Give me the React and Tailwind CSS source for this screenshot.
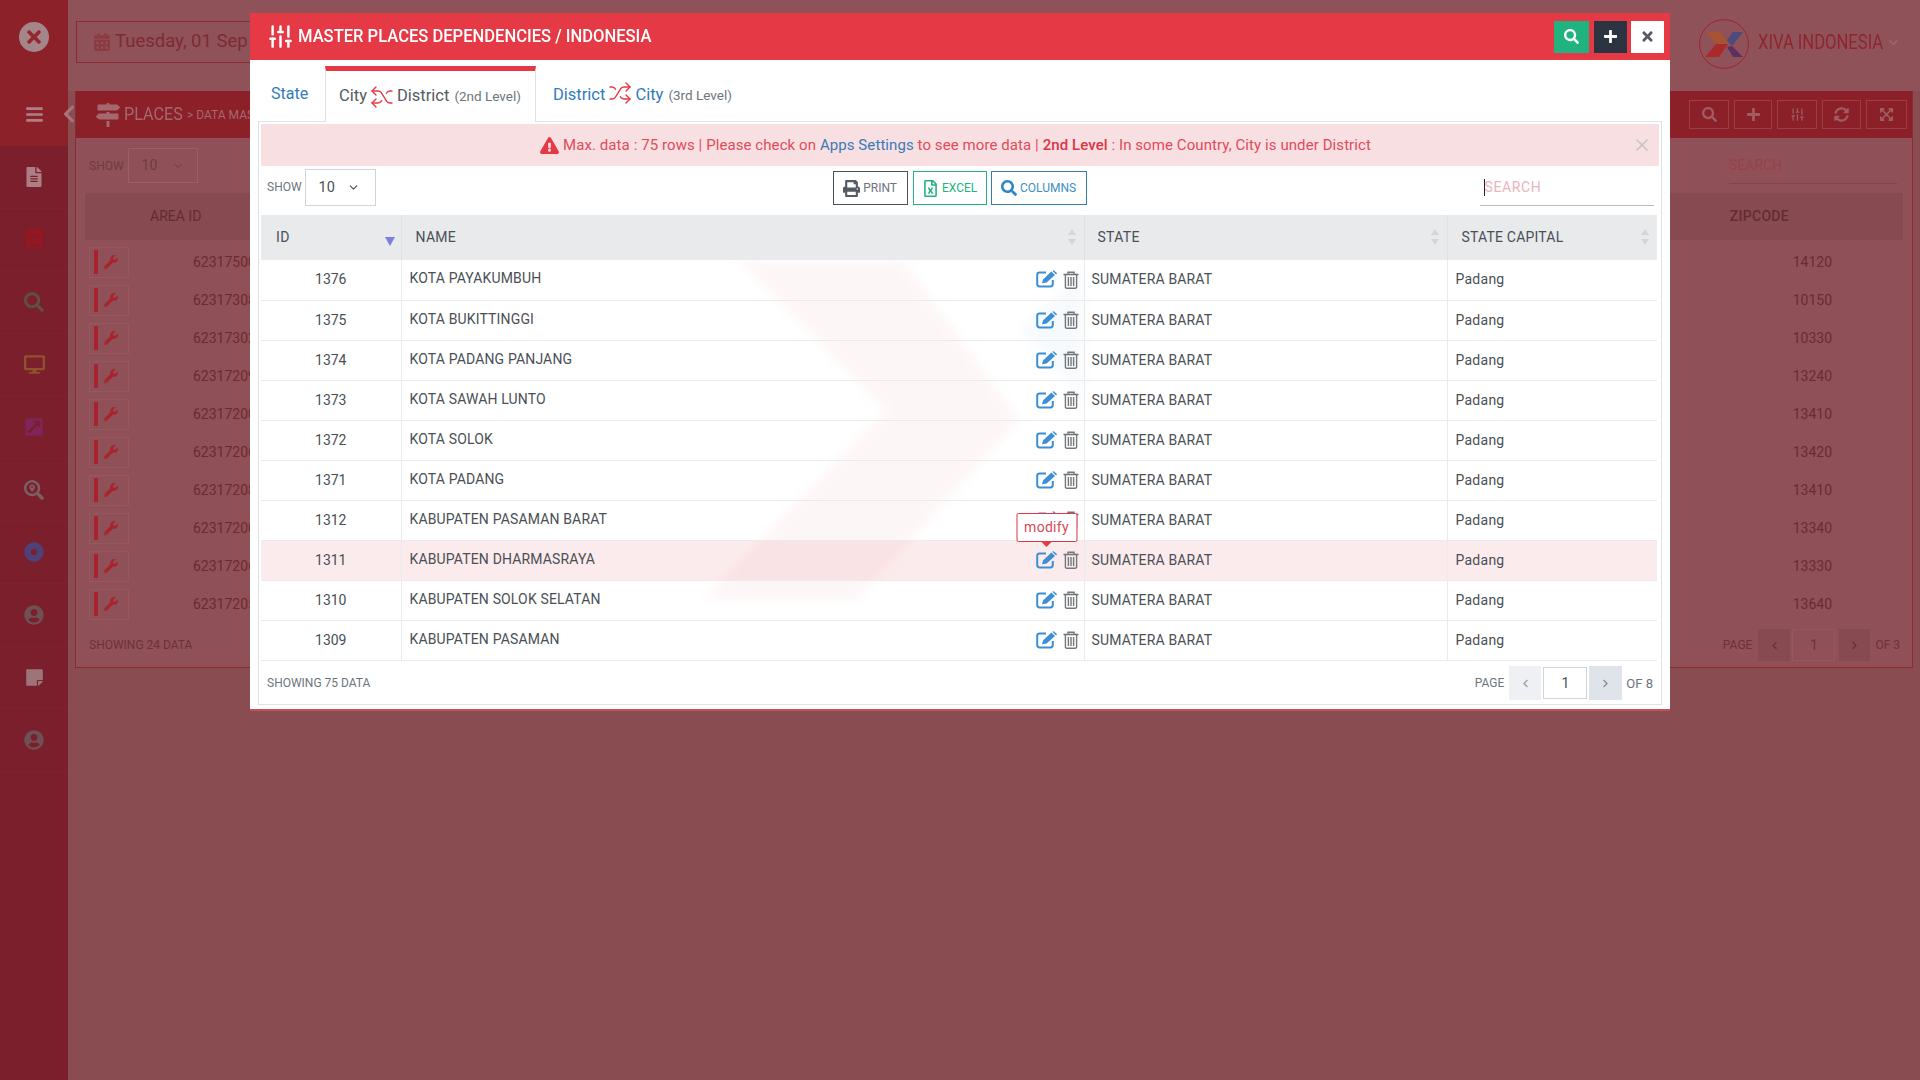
import React from "react";
import {
  FaCalendarAlt, FaBars, FaFileAlt, FaBook, FaSearch, FaDesktop, FaExternalLinkSquareAlt, FaSearchLocation, FaDotCircle,
  FaUserCircle, FaStickyNote, FaPlus, FaTimes, FaPrint, FaRegFileExcel, FaExclamationTriangle,
  FaWrench, FaMapSigns, FaChevronLeft, FaChevronRight, FaSyncAlt, FaExpandArrowsAlt,
} from "react-icons/fa";
import { ChevronDown, Shuffle, SlidersVertical, X } from "lucide-react";

const sideIcons = [
  [FaFileAlt, "text-[#ac7f85]", 20],
  [FaBook, "text-[#941722]", 20],
  [FaSearch, "text-[#5f4f40]", 20],
  [FaDesktop, "text-[#8e522e]", 21],
  [FaExternalLinkSquareAlt, "text-[#80245a]", 20],
  [FaSearchLocation, "text-[#7d6064]", 20],
  [FaDotCircle, "text-[#50407a]", 20],
  [FaUserCircle, "text-[#6f5054]", 20],
  [FaStickyNote, "text-[#9d7479]", 19],
  [FaUserCircle, "text-[#6f5054]", 20],
];

const bgRows = [
  ["62317500", "14120"], ["62317308", "10150"], ["62317302", "10330"], ["62317209", "13240"], ["62317200", "13410"],
  ["62317206", "13420"], ["62317208", "13410"], ["62317200", "13340"], ["62317206", "13330"], ["62317205", "13640"],
];

const rows = [
  ["1376", "KOTA PAYAKUMBUH"], ["1375", "KOTA BUKITTINGGI"], ["1374", "KOTA PADANG PANJANG"], ["1373", "KOTA SAWAH LUNTO"],
  ["1372", "KOTA SOLOK"], ["1371", "KOTA PADANG"], ["1312", "KABUPATEN PASAMAN BARAT"], ["1311", "KABUPATEN DHARMASRAYA"],
  ["1310", "KABUPATEN SOLOK SELATAN"], ["1309", "KABUPATEN PASAMAN"],
];

function LogoX({ size }) {
  return (
    <svg width={size} height={size} viewBox="0 0 50 50">
      <circle cx="25" cy="25" r="24.4" fill="none" stroke="#9c2530" strokeWidth="1" />
      <polygon points="7,13 22,13 29,25 17,25" fill="#a85434" />
      <polygon points="17,25 29,25 20,38 6,38" fill="#a82a2c" />
      <polygon points="28,21 34,13 44,13 33,27" fill="#4d4a7e" />
      <polygon points="28,28 33,27 44,38 34,38" fill="#5b2f61" />
    </svg>
  );
}

function SortIcon() {
  return (
    <svg width="10" height="18" viewBox="0 0 10 18" className="shrink-0">
      <polygon points="5,1 9,7 1,7" fill="#d3d6d9" />
      <polygon points="5,17 9,11 1,11" fill="#d3d6d9" />
    </svg>
  );
}

function EditIcon() {
  return (
    <svg width="22" height="18" viewBox="0 0 22 18" className="absolute -top-px left-0 text-[#3a8fd6]">
      <path d="M10 2.5H3.6A2.4 2.4 0 0 0 1.2 4.9V14.1A2.4 2.4 0 0 0 3.6 16.5H14.4A2.4 2.4 0 0 0 16.8 14.1V10" fill="none" stroke="currentColor" strokeWidth="2" />
      <path d="M6 13.2L7 9.6L15.4 1.6L19 5L10.6 12.6ZM16.3.8L17.6.2L21 3L20.4 4.3L19.8 4.3Z" fill="currentColor" />
    </svg>
  );
}

function TrashIcon() {
  return (
    <svg width="16" height="18" viewBox="0 0 16 18" className="ml-[5px] shrink-0 text-[#72777b]">
      <path d="M0.5 3.5H15.5" stroke="currentColor" strokeWidth="1.6" />
      <path d="M5 3V1.3H11V3" fill="none" stroke="currentColor" strokeWidth="1.4" />
      <path d="M2.4 3.5V16A1.2 1.2 0 0 0 3.6 17.2H12.4A1.2 1.2 0 0 0 13.6 16V3.5" fill="none" stroke="currentColor" strokeWidth="1.4" />
      <path d="M5.4 6V15M8 6V15M10.6 6V15" stroke="currentColor" strokeWidth="1.4" />
    </svg>
  );
}

function Background() {
  return (
    <div className="flex h-[1080px] w-full bg-[#894c51]">
      <aside className="flex w-[68px] shrink-0 flex-col bg-[#7a1f2b]">
        <div className="flex h-[146px] flex-col items-center bg-[#8c212a]">
          <div className="mt-[22px] flex h-[30px] w-[30px] items-center justify-center rounded-full bg-[#a4868a]">
            <FaTimes size={20} className="text-[#96262d]" />
          </div>
          <FaBars size={19} className="mt-[53px] text-[#ae7f84]" />
        </div>
        {sideIcons.map(([Icon, color, size], i) => (
          <div key={i} className="flex h-[62.6px] items-center justify-center border-b border-[#7f2230]">
            <Icon size={size} className={color} />
          </div>
        ))}
      </aside>
      <main className="flex min-w-0 flex-1 flex-col">
        <div className="flex h-[91px] shrink-0 items-start bg-[#905259]">
          <div className="ml-[8px] mt-[21px] flex h-[42px] w-[300px] items-center gap-[4px] border border-[#8b2a33] pl-[16px] text-[18.5px] text-[#7c2b34]">
            <FaCalendarAlt size={18} className="text-[#8d3a43]" />
            <span>Tuesday, 01 Sep 2020</span>
          </div>
          <div className="ml-auto mr-[19px] mt-[19px] flex items-center">
            <LogoX size={50} />
            <span className="-mt-[4px] ml-[9px] w-[125px] origin-left scale-x-[0.83] whitespace-nowrap text-[20px] text-[#8f2530]">XIVA INDONESIA</span>
            <ChevronDown size={15} className="-mt-[4px] ml-[3px] text-[#a06a70]" />
          </div>
        </div>
        <section className="relative ml-[7px] flex h-[577px] w-[1838px] flex-col border-b border-l border-r border-[#8b2a33] bg-[#8f5157]">
          <FaChevronLeft size={20} className="absolute -left-[17px] top-[13px] text-[#a87379]" />
          <div className="flex h-[47px] shrink-0 items-center bg-[#8b2029] pl-[20px] pr-[5px] text-[#a5686e]">
            <FaMapSigns size={24} />
            <span className="ml-[4px] w-[60px] origin-left scale-x-[0.85] whitespace-nowrap text-[19px]">PLACES</span>
            <span className="ml-[3px] text-[12px]">&gt; DATA MASTER</span>
            <div className="ml-auto flex gap-[5px]">
              {[[FaSearch, 40], [FaPlus, 38], [SlidersVertical, 40], [FaSyncAlt, 39], [FaExpandArrowsAlt, 41]].map(([Icon, w], i) => (
                <div key={i} style={{ width: w }} className="flex h-[29px] items-center justify-center border border-[#9a3d45] text-[#a05c62]">
                  <Icon size={15} />
                </div>
              ))}
            </div>
          </div>
          <div className="flex h-[55px] shrink-0 items-center pl-[13px] pr-[15px] text-[12px] text-[#6f3a40]">
            <span>SHOW</span>
            <div className="ml-[4px] flex h-[35px] w-[70px] items-center justify-between border border-[#9a6066] px-[13px] text-[14px]">
              10 <ChevronDown size={12} />
            </div>
            <div className="ml-auto flex h-[37px] w-[168px] items-center border-b border-[#80454b] text-[14px] text-[#98404a]">SEARCH</div>
          </div>
          <div className="mx-[9px] flex h-[47px] shrink-0 items-center bg-[#864a50] text-[14px] text-[#652a32]">
            <span className="ml-[65px]">AREA ID</span>
            <span className="ml-auto mr-[114px] text-[14px] font-medium tracking-[0.3px]">ZIPCODE</span>
          </div>
          <div className="mt-[3px] flex flex-col">
            {bgRows.map(([id, zip]) => (
              <div key={id + zip} className="flex h-[38px] items-center pl-[13px] text-[14px] text-[#6c2a32]">
                <div className="flex h-[31px] w-[40px] items-center border border-[#96585e] pl-[4px]">
                  <span className="h-[24px] w-[4px] bg-[#a8232d]" />
                  <FaWrench size={14} className="ml-[6px] text-[#a8232d]" />
                </div>
                <span className="ml-[64px]">{id}</span>
                <span className="ml-auto mr-[80px]">{zip}</span>
              </div>
            ))}
          </div>
          <div className="flex flex-1 items-center pl-[13px] pr-[12px] text-[12px] text-[#6e3138]">
            <span>SHOWING 24 DATA</span>
            <span className="ml-auto">PAGE</span>
            <div className="ml-[6px] flex h-[32px] w-[32px] items-center justify-center bg-[#864a50]"><FaChevronLeft size={9} /></div>
            <div className="ml-[2px] flex h-[32px] w-[43px] items-center justify-center border border-[#96585e] text-[14px]">1</div>
            <div className="ml-[4px] flex h-[32px] w-[31px] items-center justify-center bg-[#864a50]"><FaChevronRight size={9} /></div>
            <span className="ml-[5px]">OF 3</span>
          </div>
        </section>
      </main>
    </div>
  );
}

function Modal() {
  return (
    <div className="absolute left-[250px] top-[13px] z-10 flex h-[698px] w-[1420px] flex-col border-b-2 border-[#c4505a] bg-white">
      <header className="flex h-[47px] shrink-0 items-center bg-[#e63946] pl-[17px] pr-[6px] text-white">
        <SlidersVertical size={27} strokeWidth={2.2} />
        <h1 className="-mt-[2px] ml-[4px] origin-left scale-x-[0.92] whitespace-nowrap text-[18px] font-medium">MASTER PLACES DEPENDENCIES / INDONESIA</h1>
        <div className="ml-auto flex items-center">
          <button className="flex h-[32px] w-[35px] items-center justify-center bg-[#20b37f]"><FaSearch size={15} /></button>
          <button className="ml-[5px] flex h-[32px] w-[33px] items-center justify-center bg-[#2b3440]"><FaPlus size={15} /></button>
          <button className="ml-[4px] flex h-[32px] w-[33px] items-center justify-center bg-white text-[#555b62]"><FaTimes size={15} /></button>
        </div>
      </header>

      <nav className="mx-[8px] flex h-[61px] shrink-0 items-end">
        <div className="flex h-[55px] w-[67px] items-start pl-[13px] pt-[16px] text-[16px] text-[#337ab7]">State</div>
        <div className="relative top-px z-[1] flex h-[56px] w-[211px] items-center border-x border-[#dee2e6] border-t-[5px] border-t-[#e63946] bg-white pl-[13px] text-[16.5px] text-[#555b62]">
          <span>City</span>
          <Shuffle size={24} strokeWidth={1.4} className="mx-[3px] -scale-x-100 text-[#e63946]" />
          <span>District</span>
          <span className="ml-[5px] text-[13.5px] text-[#6c757d]">(2nd Level)</span>
        </div>
        <div className="flex h-[51px] items-center pl-[17px] text-[16.5px] text-[#337ab7]">
          <span>District</span>
          <Shuffle size={24} strokeWidth={1.4} className="mx-[3px] -mt-[6px] text-[#e63946]" />
          <span>City</span>
          <span className="ml-[5px] text-[13.5px] text-[#6c757d]">(3rd Level)</span>
        </div>
      </nav>

      <div className="relative mx-[8px] flex h-[584px] flex-col border border-[#dee2e6] px-[2px] pt-[2px]">
        <div className="flex h-[42px] shrink-0 items-center justify-center bg-[#f8dfe2] pr-[9px] text-[15px] tracking-[0.08px] text-[#e14b5a]">
          <FaExclamationTriangle size={19} className="mr-[4px] text-[#e63946]" />
          <span>Max. data : 75 rows | Please check on&nbsp;</span>
          <span className="text-[#3a7ab8]">Apps Settings</span>
          <span>&nbsp;to see more data |&nbsp;</span>
          <b className="font-medium text-[#dc3545]">2nd Level</b>
          <span>&nbsp;: In some Country, City is under District</span>
          <X size={20} className="absolute right-[9px] top-[13px] text-[#c9c4c6]" />
        </div>

        <div className="flex h-[49px] shrink-0 items-end pb-[9px]">
          <span className="mb-[10px] ml-[6px] text-[12px] text-[#6c757d]">SHOW</span>
          <div className="ml-[3px] flex h-[37px] w-[71px] items-center border border-[#ced4da] pl-[13px] pr-[15px] text-[14.5px] text-[#495057]">
            10 <ChevronDown size={13} className="ml-auto" />
          </div>
          <button className="mb-px ml-[457px] flex h-[34px] w-[75px] items-center justify-center gap-[3px] border border-[#4a4f55] text-[12px] text-[#6c757d]">
            <FaPrint size={17} className="text-[#555b62]" /> PRINT
          </button>
          <button className="mb-px ml-[5px] flex h-[34px] w-[74px] items-center justify-center gap-[3px] border border-[#20b37f] text-[12px] text-[#20b37f]">
            <FaRegFileExcel size={17} /> EXCEL
          </button>
          <button className="mb-px ml-[4px] flex h-[34px] w-[96px] items-center justify-center gap-[3px] border border-[#337ab7] text-[12px] text-[#3a8fc4]">
            <FaSearch size={16} className="text-[#2e86c8]" /> COLUMNS
          </button>
          <div className="ml-[393px] flex h-[37px] w-[174px] items-center border-b border-[#b9bec3] pl-[4px]">
            <span className="h-[17px] w-px bg-[#222]" />
            <span className="text-[14px] tracking-[0.6px] text-[#ecb3ba]">SEARCH</span>
          </div>
        </div>

        <div className="relative w-[1396px]">
          <svg className="absolute left-0 top-[45px] h-[400px] w-[1396px] opacity-60 blur-[5px]" viewBox="261 260 1396 400">
            <polygon points="737,260 903,260 1020,420 857,600 703,600 885,410" fill="#fdf1f2" />
            <polygon points="1084,270 1020,330 1084,400" fill="#f3f7fb" />
          </svg>
          <table className="relative w-[1396px] table-fixed border-collapse text-[14px] text-[#4a4f55]">
            <colgroup>
              <col className="w-[140px]" /><col className="w-[683px]" /><col className="w-[363px]" /><col className="w-[210px]" />
            </colgroup>
            <thead>
              <tr className="h-[45px] bg-[#e8eaec] text-left text-[14px] text-[#495057]">
                <th className="border-r border-[#dee2e6] pb-[1px] pl-[15px] font-normal tracking-[0.4px]">
                  <div className="flex items-center justify-between pr-[6px]">
                    ID
                    <svg width="10" height="9" viewBox="0 0 10 9" className="mt-[9px]"><polygon points="0,0 10,0 5,9" fill="#7b7fe0" /></svg>
                  </div>
                </th>
                <th className="border-r border-[#dee2e6] pb-[1px] pl-[14px] font-normal tracking-[0.3px]">
                  <div className="flex items-center justify-between pr-[7px]">NAME <SortIcon /></div>
                </th>
                <th className="border-r border-[#dee2e6] pb-[1px] pl-[13px] font-normal tracking-[0.3px]">
                  <div className="flex items-center justify-between pr-[7px]">STATE <SortIcon /></div>
                </th>
                <th className="pb-[1px] pl-[14px] font-normal tracking-[0.2px]">
                  <div className="flex items-center justify-between pr-[7px]">STATE CAPITAL <SortIcon /></div>
                </th>
              </tr>
            </thead>
            <tbody>
              {rows.map(([id, name]) => (
                <tr key={id} className={`h-[40px] border-b border-[#e9ebed] ${id === "1311" ? "bg-[#e63946]/10" : ""}`}>
                  <td className="border-r border-[#e9ebed] pr-[54px] text-right">{id}</td>
                  <td className="border-r border-[#e9ebed] pl-[8px] pr-[5px]">
                    <div className="flex items-center tracking-[0.15px]">
                      <span className="-mt-[2px]">{name}</span>
                      <span className="relative ml-auto h-[17px] w-[22px]">
                        <EditIcon />
                        {id === "1311" && (
                          <span className="absolute bottom-[calc(100%+10px)] left-1/2 z-10 flex h-[29px] w-[61px] -translate-x-1/2 items-center justify-center rounded-[2px] border border-[#dc3545] bg-white text-[14px] tracking-[0.3px] text-[#d9485a]">
                            modify
                            <span className="absolute left-1/2 top-full h-0 w-0 -translate-x-1/2 border-x-[6px] border-t-[6px] border-x-transparent border-t-[#e63946]" />
                          </span>
                        )}
                      </span>
                      <TrashIcon />
                    </div>
                  </td>
                  <td className="border-r border-[#e9ebed] pl-[7px] tracking-[0.15px]">SUMATERA BARAT</td>
                  <td className="pl-[8px] tracking-[0.25px]">Padang</td>
                </tr>
              ))}
            </tbody>
          </table>
        </div>

        <footer className="flex flex-1 items-center pt-[2px] text-[#6c757d]">
          <span className="ml-[6px] text-[12px]">SHOWING 75 DATA</span>
          <span className="ml-auto text-[12px]">PAGE</span>
          <div className="ml-[5px] flex h-[34px] w-[32px] items-center justify-center bg-[#eef0f4]"><FaChevronLeft size={9} className="text-[#9aa0a6]" /></div>
          <div className="ml-[2px] flex h-[32px] w-[44px] items-center justify-center border border-[#ced4da] text-[14px] text-[#495057]">1</div>
          <div className="ml-[2px] flex h-[34px] w-[33px] items-center justify-center bg-[#dfe3ea]"><FaChevronRight size={9} className="text-[#8a9096]" /></div>
          <span className="ml-[4px] mr-[6px] text-[13px]">OF 8</span>
        </footer>
      </div>
    </div>
  );
}

export default function App() {
  return (
    <div className="relative h-[1080px] w-full overflow-hidden font-['Roboto',sans-serif]">
      <Background />
      <Modal />
    </div>
  );
}
